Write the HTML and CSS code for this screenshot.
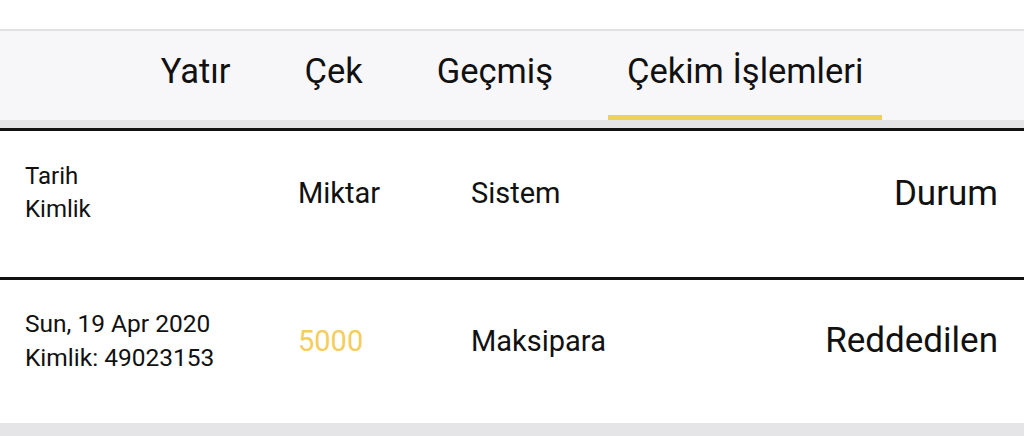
FILE: index.html
```html
<!DOCTYPE html>
<html lang="tr">
<head>
  <meta charset="UTF-8">
  <title>Çekim İşlemleri</title>
  <link rel="stylesheet" href="styles.css">
</head>
<body>
  <div class="top-space"></div>
  <nav class="tabs">
    <a class="tab">Yatır</a>
    <a class="tab">Çek</a>
    <a class="tab">Geçmiş</a>
    <a class="tab active">Çekim İşlemleri</a>
  </nav>
  <div class="tabs-shadow"></div>

  <div class="table">
    <div class="row head">
      <div class="col col-date">
        <div>Tarih</div>
        <div>Kimlik</div>
      </div>
      <div class="col col-amount">Miktar</div>
      <div class="col col-system">Sistem</div>
      <div class="col col-status">Durum</div>
    </div>
    <div class="row">
      <div class="col col-date">
        <div>Sun, 19 Apr 2020</div>
        <div>Kimlik: 49023153</div>
      </div>
      <div class="col col-amount amount">5000</div>
      <div class="col col-system">Maksipara</div>
      <div class="col col-status">Reddedilen</div>
    </div>
  </div>
  <div class="bottom-bar"></div>
</body>
</html>
```

FILE: styles.css
```css
body {
  margin: 0;
  font-family: Roboto, "Noto Sans", Arial, sans-serif;
  color: #111;
  background-color: #fff;
}
.top-space {
  height: 29px;
  background-color: #fff;
  border-bottom: 2px solid #e2e1e4;
}
.tabs {
  display: flex;
  justify-content: center;
  gap: 36px;
  background-color: #f7f6f8;
  height: 89px;
}
.tab {
  display: flex;
  align-items: center;
  padding: 0 19px 5px;
  font-size: 34.5px;
  color: #111;
  border-bottom: 5px solid transparent;
}
.tab.active {
  border-bottom-color: #f5cd5a;
}
.tabs-shadow {
  height: 8px;
  background-color: #e4e3e6;
  border-bottom: 3px solid #111;
}
.row {
  display: flex;
  align-items: center;
  height: 149px;
  padding: 0 26px 22px 25px;
  box-sizing: border-box;
  border-bottom: 3px solid #111;
}
.row:last-child {
  border-bottom: none;
  height: 143px;
}
.col-date {
  width: 273px;
  font-size: 24.5px;
  line-height: 34px;
}
.head .col-date {
  font-size: 24px;
  line-height: 33px;
}
.col-amount {
  width: 173px;
  font-size: 29px;
}
.amount {
  color: #f5cd5a;
}
.col-system {
  flex: 1;
  font-size: 29px;
}
.col-status {
  font-size: 35px;
  text-align: right;
}
.bottom-bar {
  height: 13px;
  background-color: #e5e5e7;
}
```
